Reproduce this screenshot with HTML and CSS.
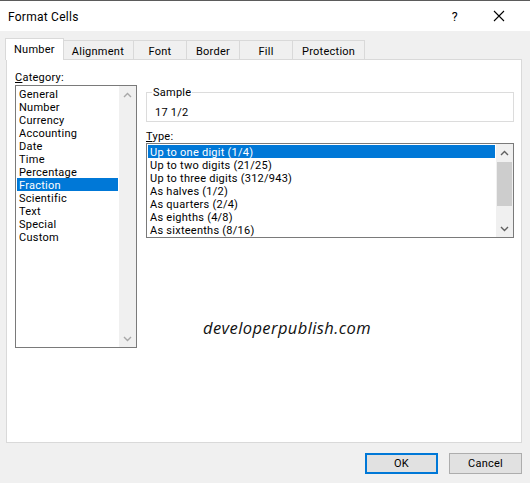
FILE: index.html
```html
<!DOCTYPE html>
<html>
<head>
<meta charset="utf-8">
<link rel="stylesheet" href="styles.css">
</head>
<body>
<div class="win">
  <div class="titlebar">
    <span class="title">Format Cells</span>
    <span class="help">?</span>
    <svg class="close" width="12" height="12" viewBox="0 0 12 12"><path d="M1 1 L11 11 M11 1 L1 11" stroke="#000" stroke-width="1.1" fill="none"/></svg>
  </div>
  <div class="main">
    <div class="tabs">
      <div class="tab active">Number</div>
      <div class="tab">Alignment</div>
      <div class="tab">Font</div>
      <div class="tab">Border</div>
      <div class="tab">Fill</div>
      <div class="tab">Protection</div>
    </div>
    <div class="panel">
      <div class="col-left">
        <div class="label"><u>C</u>ategory:</div>
        <div class="listbox cat">
          <ul class="items">
            <li>General</li>
            <li>Number</li>
            <li>Currency</li>
            <li>Accounting</li>
            <li>Date</li>
            <li>Time</li>
            <li>Percentage</li>
            <li class="sel">Fraction</li>
            <li>Scientific</li>
            <li>Text</li>
            <li>Special</li>
            <li>Custom</li>
          </ul>
          <div class="scrollbar disabled">
            <div class="sb-btn"><svg width="9" height="6" viewBox="0 0 9 6"><path d="M1 5 L4.5 1.5 L8 5" stroke="currentColor" stroke-width="1.4" fill="none"/></svg></div>
            <div class="sb-track"></div>
            <div class="sb-btn"><svg width="9" height="6" viewBox="0 0 9 6"><path d="M1 1 L4.5 4.5 L8 1" stroke="currentColor" stroke-width="1.4" fill="none"/></svg></div>
          </div>
        </div>
      </div>
      <div class="col-right">
        <fieldset class="sample">
          <legend>Sample</legend>
          <div class="sample-val">17 1/2</div>
        </fieldset>
        <div class="label type-label"><u>T</u>ype:</div>
        <div class="listbox type">
          <ul class="items">
            <li class="sel">Up to one digit (1/4)</li>
            <li>Up to two digits (21/25)</li>
            <li>Up to three digits (312/943)</li>
            <li>As halves (1/2)</li>
            <li>As quarters (2/4)</li>
            <li>As eighths (4/8)</li>
            <li>As sixteenths (8/16)</li>
          </ul>
          <div class="scrollbar">
            <div class="sb-btn"><svg width="9" height="6" viewBox="0 0 9 6"><path d="M1 5 L4.5 1.5 L8 5" stroke="currentColor" stroke-width="1.4" fill="none"/></svg></div>
            <div class="sb-track"><div class="sb-thumb"></div></div>
            <div class="sb-btn"><svg width="9" height="6" viewBox="0 0 9 6"><path d="M1 1 L4.5 4.5 L8 1" stroke="currentColor" stroke-width="1.4" fill="none"/></svg></div>
          </div>
        </div>
      </div>
      <div class="watermark">developerpublish.com</div>
    </div>
    <div class="buttons">
      <button class="btn default">OK</button>
      <button class="btn">Cancel</button>
    </div>
  </div>
</div>
</body>
</html>
```
FILE: styles.css
```css
* { box-sizing: border-box; }
html, body { margin: 0; padding: 0; }
body {
  background: #f0f0f0;
  font-family: Roboto, "Liberation Sans", sans-serif;
  font-size: 11px;
  letter-spacing: 0.25px;
  color: #000;
}
.win {
  width: 530px;
  height: 483px;
  display: flex;
  flex-direction: column;
  background: #f0f0f0;
}
.titlebar {
  height: 31px;
  flex: none;
  background: #fff;
  border-top: 1px solid #5b5b5b;
  display: flex;
  align-items: center;
  padding-left: 8px;
  padding-top: 1px;
}
.title { font-size: 12px; }
.help { margin-left: auto; font-size: 12.5px; margin-right: 35px; }
.close { margin-right: 25px; margin-top: -1px; }
.main {
  flex: 1;
  display: flex;
  flex-direction: column;
  padding: 7px 8px 0 6px;
}
.tabs {
  display: flex;
  align-items: flex-end;
  height: 21px;
  margin-left: -1px;
  position: relative;
  z-index: 1;
}
.tab {
  height: 19px;
  min-width: 54px;
  padding: 4px 9px 0;
  line-height: 14px;
  text-align: center;
  background: #f0f0f0;
  border: 1px solid #d9d9d9;
  border-bottom: none;
  margin-left: -1px;
}
.tab:first-child { margin-left: 0; }
.tab.active {
  height: 22px;
  background: #fff;
  padding: 4px 8px 0;
  margin-bottom: -1px;
  margin-right: -1px;
  position: relative;
}
.panel {
  height: 384px;
  flex: none;
  background: #fff;
  border: 1px solid #d9d9d9;
  display: flex;
  gap: 9px;
  padding: 10px 7px 0 8px;
  position: relative;
}
.col-left { width: 122px; display: flex; flex-direction: column; }
.col-right { width: 368px; display: flex; flex-direction: column; }
.label { height: 13px; line-height: 13px; padding-top: 1px; }
.listbox {
  border: 1px solid #7a7a7a;
  display: flex;
  margin-top: 2px;
}
.listbox.cat { height: 263px; }
.listbox.type { height: 95px; margin-top: 1px; }
.items {
  list-style: none;
  margin: 0;
  padding: 1px;
  flex: 1;
}
.items li {
  height: 13px;
  line-height: 13px;
  padding-left: 2px;
  padding-top: 1px;
  white-space: nowrap;
}
.items li.sel { background: #0078d7; color: #fff; }
.scrollbar {
  width: 17px;
  display: flex;
  flex-direction: column;
  background: #f0f0f0;
  color: #606060;
}
.scrollbar.disabled { color: #a8a8a8; }
.sb-btn {
  height: 17px;
  display: flex;
  align-items: center;
  justify-content: center;
}
.sb-btn svg { display: block; }
.sb-track { flex: 1; padding: 1px 1px 0; }
.sb-thumb { height: 44px; background: #cdcdcd; }
.sample {
  margin: 16px 0 0;
  padding: 0 5px 2px;
  border: 1px solid #dcdcdc;
  min-width: 0;
}
.sample legend {
  padding: 0 1px;
  line-height: 13px;
}
.sample-val {
  margin-top: 7px;
  padding-left: 3px;
  line-height: 13px;
}
.type-label { margin-top: 7px; }
.watermark {
  position: absolute;
  left: 196px;
  top: 256px;
  font-family: "Open Sans", sans-serif;
  font-style: italic;
  font-weight: 400;
  font-size: 16.5px;
  letter-spacing: 0.4px;
  color: #111;
}
.buttons {
  display: flex;
  justify-content: flex-end;
  gap: 11px;
  margin-top: 10px;
}
.btn {
  width: 73px;
  height: 21px;
  background: #e1e1e1;
  border: 1px solid #adadad;
  font-family: inherit;
  font-size: 11px;
  letter-spacing: 0.25px;
  color: #000;
  padding: 0;
}
.btn.default { border: 2px solid #0078d7; }
```
